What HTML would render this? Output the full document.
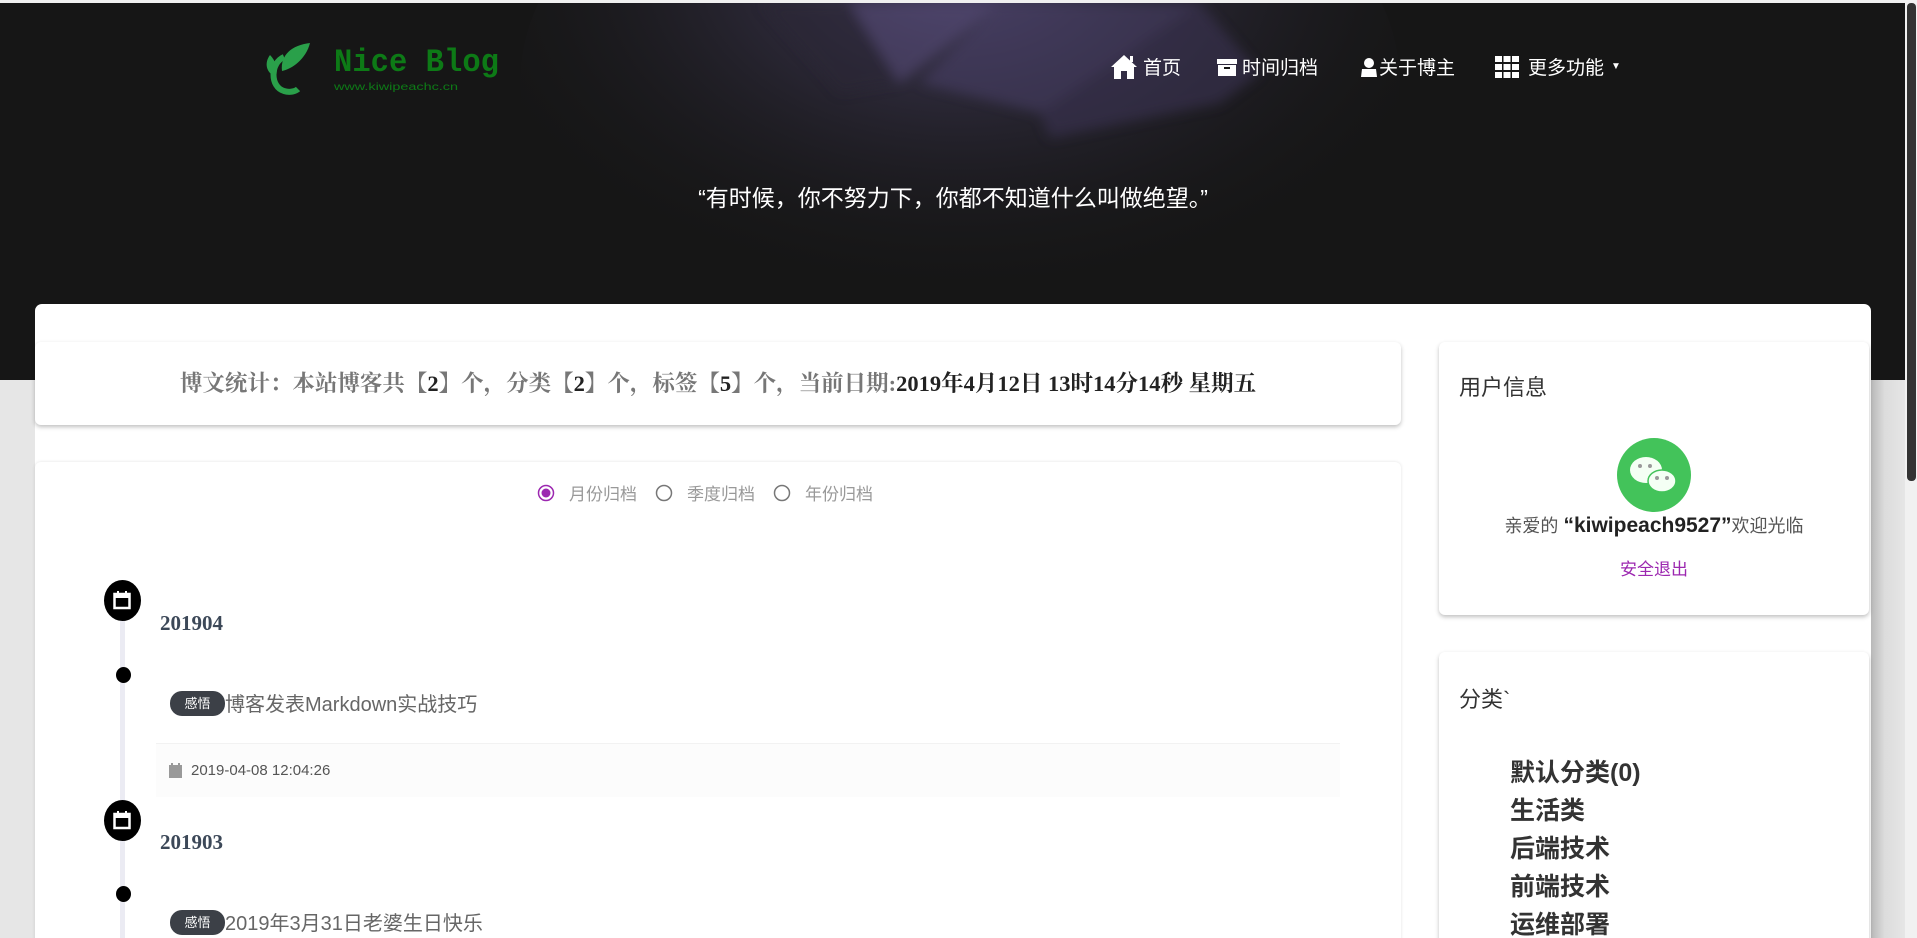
<!DOCTYPE html>
<html><head><meta charset="utf-8">
<style>
*{margin:0;padding:0;box-sizing:border-box}
html,body{width:1917px;height:938px;overflow:hidden}
body{background:#e6e6e6;font-family:"Liberation Sans","Noto Sans CJK SC",sans-serif;position:relative}
.hdr{position:absolute;left:0;top:0;width:1917px;height:380px;background:#161616;overflow:hidden;border-top:3px solid #f0f0f0}
.abs{position:absolute}
.nav{position:absolute;top:50px;color:#fff;font-size:19px;display:flex;align-items:center;gap:5px}
.card{position:absolute;background:#fff;border-radius:6px;box-shadow:0 2px 4px rgba(0,0,0,.25)}
.serif{font-family:"Liberation Serif","Noto Serif CJK SC",serif}
</style></head><body>
<div class="hdr">
<svg class="abs" style="left:0;top:0" width="1917" height="380">
<defs>
<radialGradient id="g" cx="0.5" cy="0.3" r="0.6"><stop offset="0" stop-color="#4a4266"/><stop offset="1" stop-color="#161616" stop-opacity="0"/></radialGradient>
<filter id="b"><feGaussianBlur stdDeviation="6"/></filter>
</defs>
<ellipse cx="960" cy="80" rx="440" ry="280" fill="url(#g)"/>
<g filter="url(#b)" opacity=".55">
<polygon points="850,0 1000,0 900,80" fill="#564c78"/>
<polygon points="1000,0 1200,0 1040,110 920,80" fill="#4a4068"/>
<polygon points="1040,110 1200,0 1260,70 1220,100 1050,135" fill="#3d3556"/>
<polygon points="760,0 850,0 900,80 840,90" fill="#2a2535"/>
</g>
</svg>
<svg class="abs" style="left:262px;top:38px" width="240" height="58" viewBox="0 0 240 58">
<path d="M48 2 C30 4 18 14 20 30 C30 28 44 18 48 2Z" fill="#2aa04a"/>
<path d="M8 14 C2 22 4 32 14 36 C16 28 14 20 8 14Z" fill="#2aa04a"/>
<path d="M22 16 C8 22 8 46 22 50 C28 52 34 50 36 48" stroke="#2aa04a" stroke-width="6" fill="none"/>
<text x="72" y="30" font-family="Liberation Mono,monospace" font-weight="bold" font-size="32" fill="#0d7a16" textLength="165" lengthAdjust="spacingAndGlyphs">Nice Blog</text>
<text x="72" y="49" font-family="Liberation Sans,sans-serif" font-size="10" fill="#0d7a16" textLength="124" lengthAdjust="spacingAndGlyphs">www.kiwipeachc.cn</text>
</svg>
<div class="nav" style="left:1110px"><svg width="28" height="26" viewBox="0 0 28 26"><path d="M14 1 L1 13 L4 13 L4 25 L11 25 L11 17 L17 17 L17 25 L24 25 L24 13 L27 13 Z" fill="#fff"/><rect x="20" y="2" width="3" height="6" fill="#fff"/></svg><span>首页</span></div>
<div class="nav" style="left:1217px"><svg width="20" height="18" viewBox="0 0 20 18"><rect x="0" y="1" width="20" height="5" fill="#fff"/><rect x="1" y="7" width="18" height="11" fill="#fff"/><rect x="7" y="9" width="6" height="2" fill="#161616"/></svg><span>时间归档</span></div>
<div class="nav" style="left:1360px"><svg width="18" height="20" viewBox="0 0 18 20"><circle cx="9" cy="6" r="5" fill="#fff"/><path d="M1 20 L2 12 L16 12 L17 20Z" fill="#fff"/></svg><span style="margin-left:-4px">关于博主</span></div>
<div class="nav" style="left:1495px"><svg width="24" height="22" viewBox="0 0 24 22"><g fill="#fff"><rect x="0" y="0" width="7" height="6"/><rect x="8.5" y="0" width="7" height="6"/><rect x="17" y="0" width="7" height="6"/><rect x="0" y="8" width="7" height="6"/><rect x="8.5" y="8" width="7" height="6"/><rect x="17" y="8" width="7" height="6"/><rect x="0" y="16" width="7" height="6"/><rect x="8.5" y="16" width="7" height="6"/><rect x="17" y="16" width="7" height="6"/></g></svg><span style="margin-left:4px">更多功能</span><span style="font-size:10px;margin-left:2px">▼</span></div>
<div class="abs" style="left:0;width:1906px;top:176px;text-align:center;color:#fff;font-size:23px">“有时候，你不努力下，你都不知道什么叫做绝望。”</div>
</div>
<div class="abs" style="left:1905px;top:0;width:12px;height:938px;background:#f1f1f1"></div>
<div class="abs" style="left:1907px;top:3px;width:9px;height:478px;background:#333;border-radius:4px"></div>
<div class="abs" style="left:1871px;top:380px;width:34px;height:558px;background:linear-gradient(90deg,#b8b8b8,#dcdcdc 40%,#e6e6e6)"></div>
<div class="abs" style="left:35px;top:304px;width:1836px;height:634px;background:#fff;border-radius:7px 7px 0 0"></div>

<div class="card serif" style="left:35px;top:342px;width:1366px;height:83px;text-align:center;line-height:83px;font-size:22.5px;font-weight:bold;color:#777">博文统计：本站博客共【<span style="color:#222">2</span>】个，分类【<span style="color:#222">2</span>】个，标签【<span style="color:#222">5</span>】个，当前日期:<span style="color:#222">2019年4月12日 13时14分14秒 星期五</span></div>

<div class="card" style="left:35px;top:462px;width:1366px;height:490px;box-shadow:0 0 3px rgba(0,0,0,.12)"></div>
<div class="abs" style="left:537px;top:480px;font-size:17px;color:#999;display:flex;align-items:center;gap:14px">
<svg width="18" height="18"><circle cx="9" cy="9" r="7.5" fill="none" stroke="#9c27b0" stroke-width="1.5"/><circle cx="9" cy="9" r="4.5" fill="#9c27b0"/></svg><span>月份归档</span>
<svg width="18" height="18" style="margin-left:4px"><circle cx="9" cy="9" r="7.5" fill="none" stroke="#777" stroke-width="1.5"/></svg><span>季度归档</span>
<svg width="18" height="18" style="margin-left:4px"><circle cx="9" cy="9" r="7.5" fill="none" stroke="#777" stroke-width="1.5"/></svg><span>年份归档</span></div>

<div class="abs" style="left:120px;top:600px;width:5px;height:338px;background:#ebebf3"></div>
<div class="abs" style="left:104px;top:580px;width:37px;height:41px;border-radius:50%;background:#000"></div>
<svg class="abs" style="left:113px;top:590px" width="18" height="20"><rect x="1.5" y="4" width="15" height="14" fill="none" stroke="#fff" stroke-width="2.5"/><rect x="1.5" y="4" width="15" height="4" fill="#fff"/><rect x="4" y="1" width="2" height="4" fill="#fff"/><rect x="12" y="1" width="2" height="4" fill="#fff"/></svg>
<div class="abs serif" style="left:160px;top:611px;font-size:21px;font-weight:bold;color:#3c4858">201904</div>
<div class="abs" style="left:116px;top:667px;width:15px;height:16px;border-radius:50%;background:#000"></div>
<div class="abs" style="left:170px;top:691px;width:55px;height:25px;border-radius:12px;background:#3c4047;color:#fff;font-size:13px;text-align:center;line-height:25px">感悟</div>
<div class="abs" style="left:225px;top:688px;font-size:20px;color:#666">博客发表Markdown实战技巧</div>
<div class="abs" style="left:156px;top:743px;width:1184px;height:54px;background:#fcfcfc;border-top:1px solid #f2f2f2"></div>
<svg class="abs" style="left:169px;top:763px" width="13" height="15"><rect x="0" y="2" width="13" height="13" fill="#999"/><rect x="2" y="0" width="2" height="3" fill="#999"/><rect x="9" y="0" width="2" height="3" fill="#999"/></svg>
<div class="abs" style="left:191px;top:762px;font-size:15px;color:#555">2019-04-08 12:04:26</div>

<div class="abs" style="left:104px;top:800px;width:37px;height:41px;border-radius:50%;background:#000"></div>
<svg class="abs" style="left:113px;top:810px" width="18" height="20"><rect x="1.5" y="4" width="15" height="14" fill="none" stroke="#fff" stroke-width="2.5"/><rect x="1.5" y="4" width="15" height="4" fill="#fff"/><rect x="4" y="1" width="2" height="4" fill="#fff"/><rect x="12" y="1" width="2" height="4" fill="#fff"/></svg>
<div class="abs serif" style="left:160px;top:830px;font-size:21px;font-weight:bold;color:#3c4858">201903</div>
<div class="abs" style="left:116px;top:886px;width:15px;height:16px;border-radius:50%;background:#000"></div>
<div class="abs" style="left:170px;top:910px;width:55px;height:25px;border-radius:12px;background:#3c4047;color:#fff;font-size:13px;text-align:center;line-height:25px">感悟</div>
<div class="abs" style="left:225px;top:907px;font-size:20px;color:#666">2019年3月31日老婆生日快乐</div>

<div class="card" style="left:1439px;top:342px;width:430px;height:273px">
<div class="abs" style="left:20px;top:28px;font-size:22px;color:#333">用户信息</div>
<svg class="abs" style="left:177px;top:95px" width="76" height="76"><circle cx="38" cy="38" r="37" fill="#43c35a"/><ellipse cx="30" cy="33" rx="16" ry="13" fill="#f4fff4"/><ellipse cx="46" cy="44" rx="14" ry="11" fill="#f4fff4" stroke="#43c35a" stroke-width="1.5"/><circle cx="24" cy="29" r="2" fill="#999"/><circle cx="34" cy="29" r="2" fill="#999"/><circle cx="41" cy="41" r="2" fill="#999"/><circle cx="51" cy="41" r="2" fill="#999"/></svg>
<div class="abs" style="left:0;width:430px;top:170px;text-align:center;font-size:18px;color:#555">亲爱的 <b style="font-size:21px;color:#222">“kiwipeach9527”</b>欢迎光临</div>
<div class="abs" style="left:0;width:430px;top:213px;text-align:center;font-size:17px;color:#9c27b0">安全退出</div>
</div>

<div class="card" style="left:1439px;top:652px;width:430px;height:320px">
<div class="abs" style="left:20px;top:30px;font-size:22px;color:#333">分类`</div>
<div class="abs" style="left:71px;top:102px;font-size:25px;font-weight:bold;color:#333;line-height:38px">默认分类(0)<br>生活类<br>后端技术<br>前端技术<br>运维部署</div>
</div>
</body></html>
